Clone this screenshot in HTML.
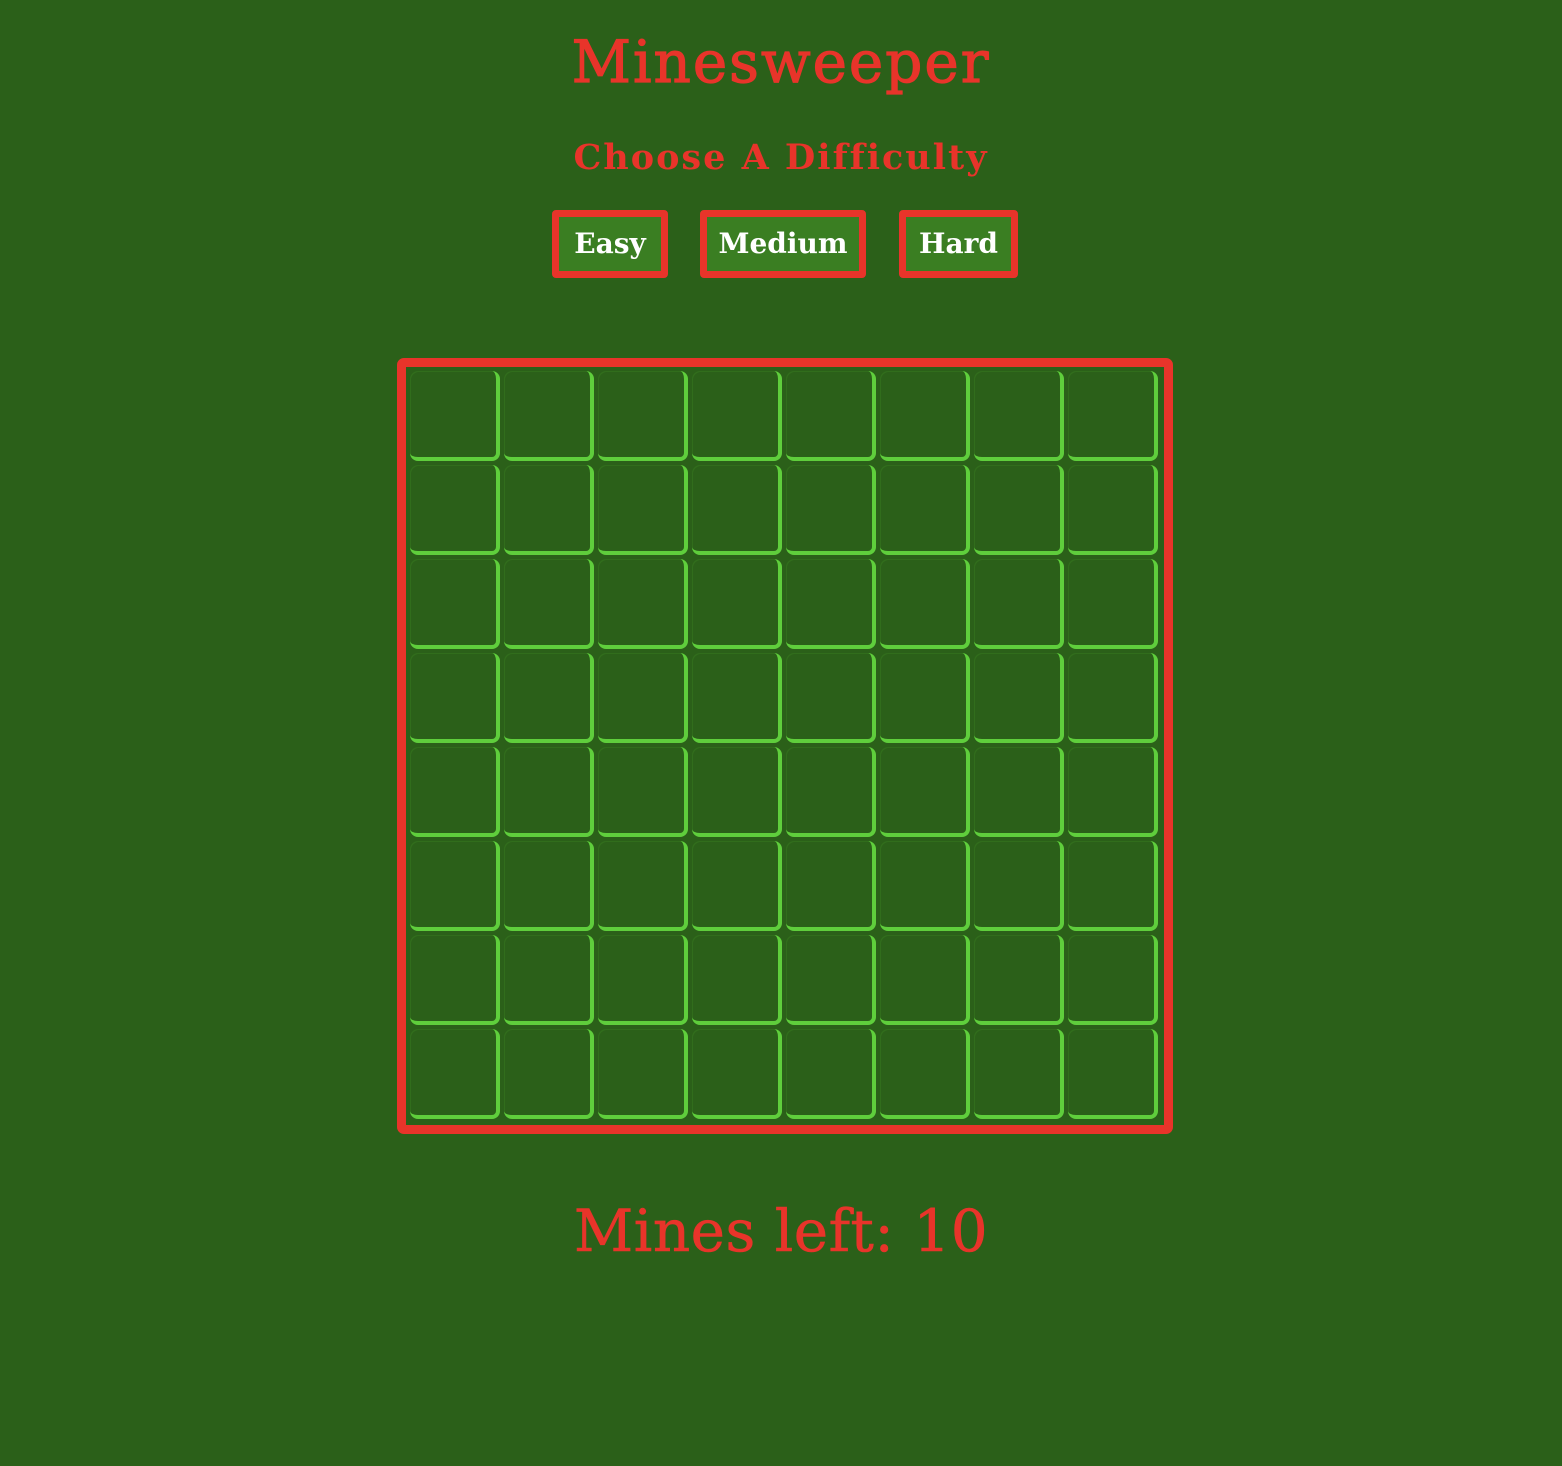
<!DOCTYPE html>
<html><head><meta charset="utf-8"><style>
html,body{margin:0;padding:0;background:#2b6019;width:1562px;height:1466px;overflow:hidden;font-family:"DejaVu Serif","Liberation Serif",serif;}
.t{position:absolute;left:0;width:1562px;text-align:center;color:#e8342a;white-space:nowrap}
#h1{top:26px;font-size:58px;line-height:72px;letter-spacing:2px;-webkit-text-stroke:1.2px #e8342a}
#h2{top:134px;font-size:35px;line-height:48px;font-weight:bold;letter-spacing:2px}
#ml{top:1195px;font-size:58px;line-height:72px;letter-spacing:0.5px;-webkit-text-stroke:0.6px #e8342a}
.b{position:absolute;top:210px;height:54px;border:7px solid #e8342a;border-radius:4px;background:#3a7e22;color:#fff;font-size:28px;font-weight:bold;line-height:54px;text-align:center;box-sizing:content-box}
#board{position:absolute;left:397px;top:358px;width:758px;height:758px;border:9px solid #e8342a;border-radius:7px}
.c{position:absolute;width:86px;height:86px;border-right:4px solid #5fce3c;border-bottom:4px solid #5fce3c;border-radius:8px;box-shadow:inset 1px 1px 0 rgba(95,206,60,0.12)}
</style></head><body>
<div class="t" id="h1">Minesweeper</div>
<div class="t" id="h2">Choose A Difficulty</div>
<div class="b" style="left:552px;width:102px">Easy</div>
<div class="b" style="left:700px;width:152px">Medium</div>
<div class="b" style="left:899px;width:105px">Hard</div>
<div id="board">
<script>
for(let r=0;r<8;r++)for(let c=0;c<8;c++)document.write('<div class="c" style="left:'+(4+c*94)+'px;top:'+(4+r*94)+'px"></div>');
</script>
</div>
<div class="t" id="ml">Mines left: 10</div>
</body></html>
